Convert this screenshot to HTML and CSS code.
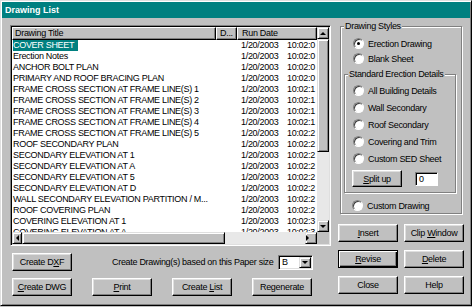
FILE: index.html
```html
<!DOCTYPE html>
<html lang="en">
<head>
  <meta charset="UTF-8" />
  <title>Drawing List</title>
  <link rel="stylesheet" href="styles.css">
</head>
<body>
  <div class="dialog">
    <div class="titlebar">Drawing List</div>

    <div class="content">
      <div class="left">
        <div class="listview">
          <div class="lv-main">
            <div class="lv-head">
              <div class="hcell c-title">Drawing Title</div>
              <div class="hcell c-d">D...</div>
              <div class="hcell c-date">Run Date</div>
            </div>
            <div class="lv-rows">
              <div class="row"><div class="c-title"><span class="sel">COVER SHEET</span></div><div class="c-d"></div><div class="c-date"><span class="dd">1/20/2003</span>10:02:0</div></div>
              <div class="row"><div class="c-title">Erection Notes</div><div class="c-d"></div><div class="c-date"><span class="dd">1/20/2003</span>10:02:0</div></div>
              <div class="row"><div class="c-title">ANCHOR BOLT PLAN</div><div class="c-d"></div><div class="c-date"><span class="dd">1/20/2003</span>10:02:0</div></div>
              <div class="row"><div class="c-title">PRIMARY AND ROOF BRACING PLAN</div><div class="c-d"></div><div class="c-date"><span class="dd">1/20/2003</span>10:02:0</div></div>
              <div class="row"><div class="c-title">FRAME CROSS SECTION AT FRAME LINE(S) 1</div><div class="c-d"></div><div class="c-date"><span class="dd">1/20/2003</span>10:02:1</div></div>
              <div class="row"><div class="c-title">FRAME CROSS SECTION AT FRAME LINE(S) 2</div><div class="c-d"></div><div class="c-date"><span class="dd">1/20/2003</span>10:02:1</div></div>
              <div class="row"><div class="c-title">FRAME CROSS SECTION AT FRAME LINE(S) 3</div><div class="c-d"></div><div class="c-date"><span class="dd">1/20/2003</span>10:02:1</div></div>
              <div class="row"><div class="c-title">FRAME CROSS SECTION AT FRAME LINE(S) 4</div><div class="c-d"></div><div class="c-date"><span class="dd">1/20/2003</span>10:02:1</div></div>
              <div class="row"><div class="c-title">FRAME CROSS SECTION AT FRAME LINE(S) 5</div><div class="c-d"></div><div class="c-date"><span class="dd">1/20/2003</span>10:02:2</div></div>
              <div class="row"><div class="c-title">ROOF SECONDARY PLAN</div><div class="c-d"></div><div class="c-date"><span class="dd">1/20/2003</span>10:02:2</div></div>
              <div class="row"><div class="c-title">SECONDARY ELEVATION AT 1</div><div class="c-d"></div><div class="c-date"><span class="dd">1/20/2003</span>10:02:2</div></div>
              <div class="row"><div class="c-title">SECONDARY ELEVATION AT A</div><div class="c-d"></div><div class="c-date"><span class="dd">1/20/2003</span>10:02:2</div></div>
              <div class="row"><div class="c-title">SECONDARY ELEVATION AT 5</div><div class="c-d"></div><div class="c-date"><span class="dd">1/20/2003</span>10:02:2</div></div>
              <div class="row"><div class="c-title">SECONDARY ELEVATION AT D</div><div class="c-d"></div><div class="c-date"><span class="dd">1/20/2003</span>10:02:2</div></div>
              <div class="row"><div class="c-title">WALL SECONDARY ELEVATION PARTITION / M...</div><div class="c-d"></div><div class="c-date"><span class="dd">1/20/2003</span>10:02:2</div></div>
              <div class="row"><div class="c-title">ROOF COVERING PLAN</div><div class="c-d"></div><div class="c-date"><span class="dd">1/20/2003</span>10:02:2</div></div>
              <div class="row"><div class="c-title">COVERING ELEVATION AT 1</div><div class="c-d"></div><div class="c-date"><span class="dd">1/20/2003</span>10:02:3</div></div>
              <div class="row"><div class="c-title">COVERING ELEVATION AT A</div><div class="c-d"></div><div class="c-date"><span class="dd">1/20/2003</span>10:02:3</div></div>
            </div>
          </div>
          <div class="vscroll">
            <div class="sb-btn"><i class="arr up"></i></div>
            <div class="sb-thumb v-thumb"></div>
            <div class="sb-track"></div>
            <div class="sb-btn"><i class="arr down"></i></div>
          </div>
          <div class="hscroll">
            <div class="sb-btn h-left"><i class="arr left"></i></div>
            <div class="sb-thumb h-thumb"></div>
            <div class="sb-track"></div>
            <div class="sb-btn h-right"><i class="arr right"></i></div>
          </div>
          <div class="corner"></div>
        </div>

        <div class="paper-row">
          <button class="btn">Create D<u>X</u>F</button>
          <span class="paper-label">Create Drawing(s) based on this Paper size</span>
          <div class="select">
            <span class="select-val">B</span>
            <div class="sb-btn drop"><i class="arr down"></i></div>
          </div>
        </div>

        <div class="action-row">
          <button class="btn"><u>C</u>reate DWG</button>
          <button class="btn"><u>P</u>rint</button>
          <button class="btn">Create <u>L</u>ist</button>
          <button class="btn">Regenerate</button>
        </div>
      </div>

      <div class="right">
        <div class="group styles">
          <span class="group-label">Drawing Styles</span>
          <div class="radio"><span class="dot on"></span>Erection Drawing</div>
          <div class="radio"><span class="dot"></span>Blank Sheet</div>

          <div class="group sed">
            <span class="group-label">Standard Erection Details</span>
            <div class="radio"><span class="dot"></span>All Building Details</div>
            <div class="radio"><span class="dot"></span>Wall Secondary</div>
            <div class="radio"><span class="dot"></span>Roof Secondary</div>
            <div class="radio"><span class="dot"></span>Covering and Trim</div>
            <div class="radio"><span class="dot"></span>Custom SED Sheet</div>
            <div class="split-row">
              <button class="btn split"><u>S</u>plit up</button>
              <div class="field">0</div>
            </div>
          </div>

          <div class="radio custom"><span class="dot"></span>Custom Drawing</div>
        </div>

        <div class="btn-grid">
          <button class="btn"><u>I</u>nsert</button>
          <button class="btn">Clip <u>W</u>indow</button>
          <button class="btn default"><u>R</u>evise</button>
          <button class="btn"><u>D</u>elete</button>
          <button class="btn">Close</button>
          <button class="btn">Help</button>
        </div>
      </div>
    </div>
  </div>
</body>
</html>
```

FILE: styles.css
```css
* {
  box-sizing: border-box;
}

body {
  margin: 0;
  background: #c0c0c0;
  font-family: "Liberation Sans", Arial, sans-serif;
  font-size: 9px;
  letter-spacing: -0.3px;
  color: #000;
}

.dialog {
  width: 472px;
  height: 306px;
  padding: 1px;
  border: 1px solid;
  border-color: #dfdfdf #000 #000 #dfdfdf;
  box-shadow: inset 1px 1px #fff, inset -1px -1px #808080;
  display: flex;
  flex-direction: column;
}

.titlebar {
  height: 16px;
  line-height: 16px;
  padding-left: 3px;
  background: #008080;
  color: #fff;
  font-weight: bold;
  letter-spacing: 0;
}

.content {
  display: flex;
  gap: 7px;
  padding: 7px 7px 0 8px;
}

/* left side: list + paper size + actions */
.left {
  width: 321px;
  display: flex;
  flex-direction: column;
}

.listview {
  height: 221px;
  padding: 1px;
  border: 1px solid;
  border-color: #808080 #fff #fff #808080;
  box-shadow: inset 1px 1px #000, inset -1px -1px #dfdfdf;
  display: grid;
  grid-template-columns: 305px 12px;
  grid-template-rows: 205px 12px;
}

.lv-main {
  background: #fff;
  overflow: hidden;
}

.lv-head {
  display: flex;
  height: 13px;
}

.hcell {
  height: 13px;
  line-height: 11px;
  background: #c0c0c0;
  border: 1px solid;
  border-color: #fff #000 #000 #fff;
  box-shadow: inset -1px -1px #808080;
  white-space: nowrap;
  overflow: hidden;
}

.c-title {
  width: 204px;
  padding-left: 1px;
  overflow: hidden;
}

.c-d {
  width: 21px;
}

.c-date {
  width: 80px;
  padding-left: 4px;
  overflow: hidden;
}

.hcell.c-title {
  padding-left: 2px;
}

.hcell.c-d {
  padding-left: 3px;
}

.hcell.c-date {
  padding-left: 4px;
}

.row {
  display: flex;
  height: 11px;
  line-height: 11px;
  white-space: nowrap;
}

.sel {
  display: inline-block;
  padding: 0 4px 0 0;
  background: #008080;
  color: #fff;
}

.dd {
  display: inline-block;
  width: 46px;
}

/* scrollbars */
.vscroll {
  display: flex;
  flex-direction: column;
}

.hscroll {
  display: flex;
}

.sb-btn,
.sb-thumb {
  background: #c0c0c0;
  border: 1px solid;
  border-color: #dfdfdf #000 #000 #dfdfdf;
  box-shadow: inset 1px 1px #fff, inset -1px -1px #808080;
}

.sb-btn {
  flex: none;
  width: 12px;
  height: 12px;
  display: flex;
  align-items: center;
  justify-content: center;
}

.h-left {
  width: 10px;
}

.v-thumb {
  height: 113px;
}

.h-thumb {
  width: 203px;
}

.sb-track {
  flex: 1;
  background: #e8e8e8;
}

.corner {
  background: #c0c0c0;
}

.arr {
  width: 0;
  height: 0;
  border: 3px solid transparent;
}

.arr.up {
  border-top: 0;
  border-bottom: 3px solid #000;
}

.arr.down {
  border-bottom: 0;
  border-top: 3px solid #000;
}

.arr.left {
  border-left: 0;
  border-right: 3px solid #000;
}

.arr.right {
  border-right: 0;
  border-left: 3px solid #000;
}

/* buttons */
.btn {
  width: 60px;
  height: 18px;
  padding: 0;
  font: inherit;
  letter-spacing: inherit;
  color: #000;
  background: #c0c0c0;
  border: 1px solid;
  border-color: #fff #000 #000 #fff;
  box-shadow: inset -1px -1px #808080, inset 1px 1px #dfdfdf;
}

.btn.default {
  border-color: #000;
  box-shadow: inset 1px 1px #fff, inset -1px -1px #000, inset -2px -2px #808080;
}

.paper-row {
  display: flex;
  align-items: center;
  height: 18px;
  margin-top: 7px;
  padding: 0 18px 0 2px;
}

.paper-label {
  margin-left: 40px;
  white-space: nowrap;
}

.select {
  margin-left: auto;
  width: 35px;
  height: 15px;
  padding: 1px;
  background: #fff;
  border: 1px solid;
  border-color: #808080 #fff #fff #808080;
  box-shadow: inset 1px 1px #000, inset -1px -1px #dfdfdf;
  display: flex;
  align-items: center;
}

.select-val {
  padding-left: 2px;
  line-height: 11px;
}

.select .drop {
  margin-left: auto;
  height: 11px;
}

.action-row {
  display: flex;
  gap: 20px;
  margin-top: 7px;
  padding-left: 2px;
}

/* right side */
.right {
  width: 125px;
  display: flex;
  flex-direction: column;
}

.group {
  position: relative;
  border: 1px solid #808080;
  box-shadow: 1px 1px #fff, inset 1px 1px #fff;
}

.group-label {
  position: absolute;
  top: -6px;
  left: 3px;
  padding: 0 1px;
  line-height: 11px;
  background: #c0c0c0;
  white-space: nowrap;
}

.styles {
  margin: 1px 1px 0 2px;
  padding: 9px 5px 0 12px;
  height: 188px;
}

.sed {
  margin: 8px 0 0 -9px;
  padding: 7px 0 5px 8px;
}

.radio {
  display: flex;
  align-items: center;
  height: 15px;
  white-space: nowrap;
}

.sed .radio {
  height: 17px;
}

.radio.custom {
  margin-top: 5px;
  margin-left: -1px;
}

.dot {
  position: relative;
  flex: none;
  width: 11px;
  height: 11px;
  margin-right: 4px;
  border-radius: 50%;
  background: #fff;
  border: 1px solid;
  border-color: #808080 #fff #fff #808080;
  box-shadow: inset 1px 1px #404040;
}

.dot.on::after {
  content: "";
  position: absolute;
  left: 3px;
  top: 3px;
  width: 3px;
  height: 3px;
  border-radius: 50%;
  background: #000;
}

.split-row {
  display: flex;
  align-items: center;
  margin-top: 3px;
}

.btn.split {
  width: 50px;
  height: 17px;
  margin-left: -1px;
}

.field {
  width: 23px;
  height: 14px;
  margin-left: 13px;
  padding: 1px 3px;
  line-height: 11px;
  background: #fff;
  border: 1px solid;
  border-color: #808080 #fff #fff #808080;
  box-shadow: inset 1px 1px #000;
}

.btn-grid {
  display: grid;
  grid-template-columns: 60px 58px;
  column-gap: 6px;
  row-gap: 8px;
  margin-top: 10px;
}
```
